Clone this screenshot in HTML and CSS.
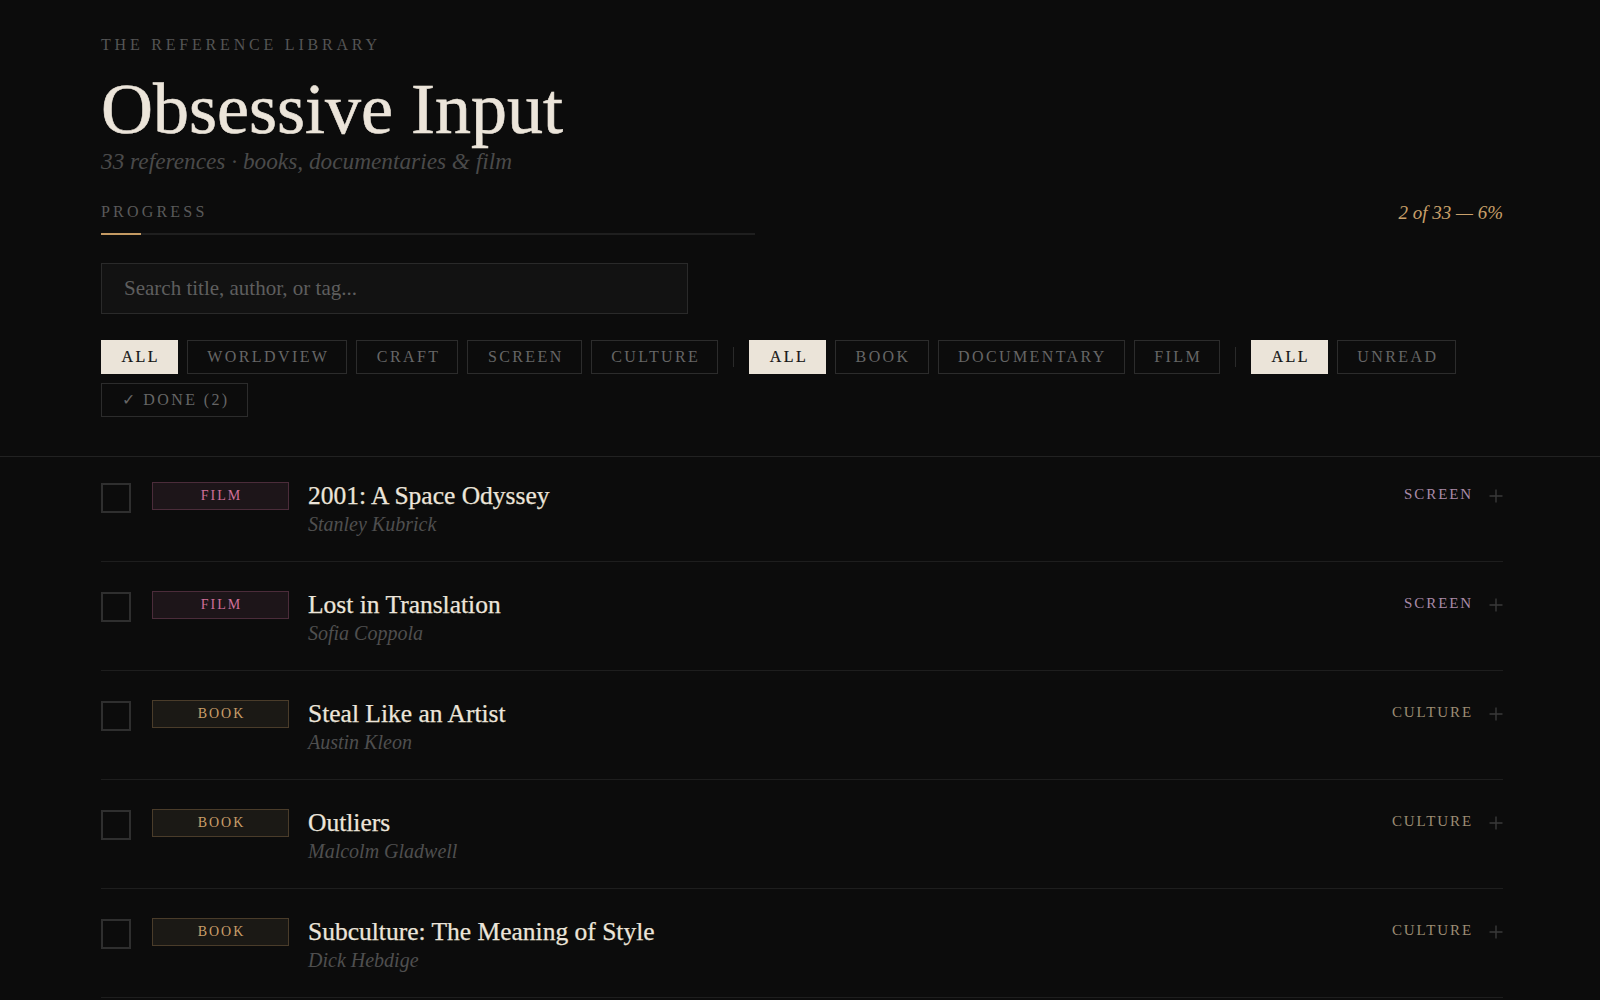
FILE: index.html
```html
<!DOCTYPE html>
<html lang="en">
<head>
<meta charset="utf-8">
<title>Obsessive Input</title>
<link rel="stylesheet" href="styles.css">
</head>
<body>
<header class="top">
  <div class="eyebrow">THE REFERENCE LIBRARY</div>
  <h1 class="title">Obsessive Input</h1>
  <p class="subtitle">33 references · books, documentaries &amp; film</p>

  <div class="progress">
    <div class="progress-left">
      <div class="progress-label">PROGRESS</div>
      <div class="track"><div class="fill" style="width:6.06%"></div></div>
    </div>
    <div class="count">2 of 33 — 6%</div>
  </div>

  <input class="search" type="text" placeholder="Search title, author, or tag...">

  <div class="filters">
    <button class="chip active">ALL</button>
    <button class="chip">WORLDVIEW</button>
    <button class="chip">CRAFT</button>
    <button class="chip">SCREEN</button>
    <button class="chip">CULTURE</button>
    <span class="sep"></span>
    <button class="chip active">ALL</button>
    <button class="chip">BOOK</button>
    <button class="chip">DOCUMENTARY</button>
    <button class="chip">FILM</button>
    <span class="sep"></span>
    <button class="chip active">ALL</button>
    <button class="chip">UNREAD</button>
    <button class="chip">✓ DONE (2)</button>
  </div>
</header>

<main class="list">
  <div class="row">
    <span class="check"></span>
    <span class="badge film">FILM</span>
    <div class="info">
      <div class="name">2001: A Space Odyssey</div>
      <div class="author">Stanley Kubrick</div>
    </div>
    <div class="side">
      <span class="tag screen">SCREEN</span>
      <svg class="plus" width="14" height="14" viewBox="0 0 14 14"><path d="M7 0.5V13.5M0.5 7H13.5" stroke="#3a3a3a" stroke-width="1.4" fill="none"/></svg>
    </div>
  </div>

  <div class="row">
    <span class="check"></span>
    <span class="badge film">FILM</span>
    <div class="info">
      <div class="name">Lost in Translation</div>
      <div class="author">Sofia Coppola</div>
    </div>
    <div class="side">
      <span class="tag screen">SCREEN</span>
      <svg class="plus" width="14" height="14" viewBox="0 0 14 14"><path d="M7 0.5V13.5M0.5 7H13.5" stroke="#3a3a3a" stroke-width="1.4" fill="none"/></svg>
    </div>
  </div>

  <div class="row">
    <span class="check"></span>
    <span class="badge book">BOOK</span>
    <div class="info">
      <div class="name">Steal Like an Artist</div>
      <div class="author">Austin Kleon</div>
    </div>
    <div class="side">
      <span class="tag culture">CULTURE</span>
      <svg class="plus" width="14" height="14" viewBox="0 0 14 14"><path d="M7 0.5V13.5M0.5 7H13.5" stroke="#3a3a3a" stroke-width="1.4" fill="none"/></svg>
    </div>
  </div>

  <div class="row">
    <span class="check"></span>
    <span class="badge book">BOOK</span>
    <div class="info">
      <div class="name">Outliers</div>
      <div class="author">Malcolm Gladwell</div>
    </div>
    <div class="side">
      <span class="tag culture">CULTURE</span>
      <svg class="plus" width="14" height="14" viewBox="0 0 14 14"><path d="M7 0.5V13.5M0.5 7H13.5" stroke="#3a3a3a" stroke-width="1.4" fill="none"/></svg>
    </div>
  </div>

  <div class="row">
    <span class="check"></span>
    <span class="badge book">BOOK</span>
    <div class="info">
      <div class="name">Subculture: The Meaning of Style</div>
      <div class="author">Dick Hebdige</div>
    </div>
    <div class="side">
      <span class="tag culture">CULTURE</span>
      <svg class="plus" width="14" height="14" viewBox="0 0 14 14"><path d="M7 0.5V13.5M0.5 7H13.5" stroke="#3a3a3a" stroke-width="1.4" fill="none"/></svg>
    </div>
  </div>
</main>
</body>
</html>
```

FILE: styles.css
```css
* { box-sizing: border-box; }

html, body {
  margin: 0;
  padding: 0;
  background: #0c0c0c;
}

body {
  font-family: "Liberation Serif", "DejaVu Serif", serif;
  color: #ece5da;
}

.top {
  padding: 36px 97px 39px 101px;
  border-bottom: 1px solid #222222;
}

.eyebrow {
  font-size: 16px;
  line-height: 18px;
  letter-spacing: 3.8px;
  color: #555555;
}

.title {
  margin: 19px 0 0;
  font-size: 72px;
  line-height: 72px;
  font-weight: normal;
  color: #ece5da;
  -webkit-text-stroke: 0.6px #ece5da;
}

.subtitle {
  margin: 2px 0 0;
  font-size: 23.3px;
  line-height: 28px;
  font-style: italic;
  color: #4a4a4a;
}

.progress {
  margin-top: 28px;
  display: flex;
  justify-content: space-between;
  align-items: flex-start;
}

.progress-left {
  width: 654px;
}

.progress-label {
  font-size: 16px;
  line-height: 18px;
  letter-spacing: 3.2px;
  color: #5a5a5a;
}

.track {
  margin-top: 12px;
  height: 2px;
  background: #1f1f1f;
}

.fill {
  height: 2px;
  background: #c49a63;
}

.count {
  margin-top: 1px;
  font-size: 19px;
  line-height: 18px;
  font-style: italic;
  color: #c9a06a;
}

.search {
  display: block;
  margin-top: 28px;
  width: 587px;
  height: 51px;
  padding: 0 22px;
  background: #121212;
  border: 1px solid #2a2a2a;
  border-radius: 0;
  outline: none;
  font-family: "Liberation Serif", "DejaVu Serif", serif;
  font-size: 21px;
  color: #ece5da;
}

.search::placeholder {
  color: #5e5e5e;
}

.filters {
  margin-top: 26px;
  display: flex;
  flex-wrap: wrap;
  align-items: center;
  gap: 9px;
}

.chip {
  margin: 0;
  height: 34px;
  padding: 7px 17px 7px 19.5px;
  background: transparent;
  border: 1px solid #2c2c2c;
  border-radius: 0;
  font-family: "Liberation Serif", "DejaVu Serif", serif;
  font-size: 16px;
  line-height: 18px;
  letter-spacing: 2.4px;
  color: #666666;
}

.chip.active {
  background: #ebe4d9;
  border-color: #ebe4d9;
  color: #151515;
  -webkit-text-stroke: 0.2px #151515;
}

.sep {
  width: 1px;
  height: 20px;
  margin: 0 6px;
  background: #2a2a2a;
}

.list {
  padding: 0 97px 0 101px;
}

.row {
  display: flex;
  align-items: flex-start;
  padding: 30px 0 25px;
  border-bottom: 1px solid #1e1e1e;
}

.row:first-child {
  padding-top: 26px;
}

.check {
  flex: none;
  width: 30px;
  height: 30px;
  border: 2px solid #2f2f2f;
}

.badge {
  flex: none;
  width: 137px;
  height: 28px;
  margin: -1px 0 0 21px;
  display: flex;
  align-items: center;
  justify-content: center;
  padding-left: 2px;
  font-size: 14px;
  line-height: 16px;
  letter-spacing: 2px;
  border: 1px solid;
}

.badge.film {
  background: #1d1519;
  border-color: #4b2c3a;
  color: #d06f9a;
}

.badge.book {
  background: #1b1915;
  border-color: #4a3c2a;
  color: #c99e69;
}

.info {
  flex: 1;
  margin-left: 19px;
}

.name {
  font-size: 25.5px;
  line-height: 25.5px;
  color: #ece5da;
  -webkit-text-stroke: 0.25px #ece5da;
}

.author {
  margin-top: 3.5px;
  font-size: 20px;
  line-height: 24px;
  font-style: italic;
  color: #4f4f4f;
}

.side {
  flex: none;
  height: 26px;
  display: flex;
  align-items: center;
  gap: 16px;
}

.tag {
  margin-bottom: 4px;
  font-size: 15px;
  line-height: 16px;
  letter-spacing: 1.9px;
}

.tag.screen { color: #a88aa8; }
.tag.culture { color: #9c8c74; }

.plus {
  display: block;
  flex: none;
}
```
